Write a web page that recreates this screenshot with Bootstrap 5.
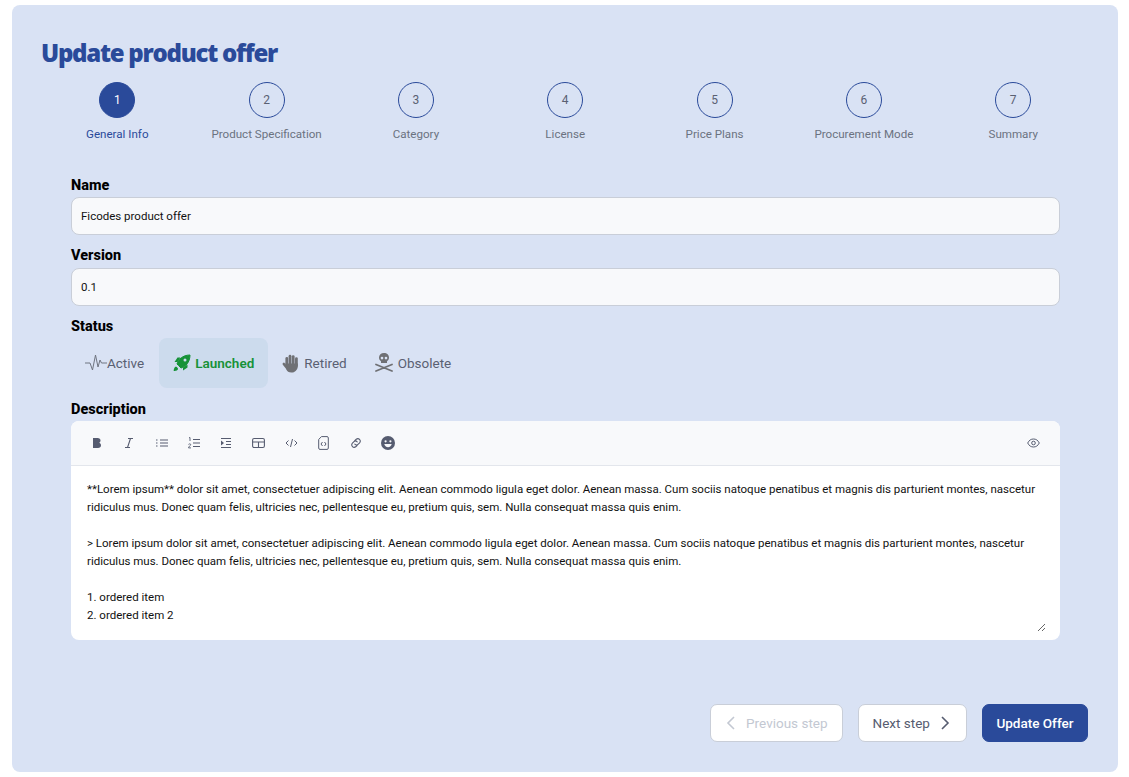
<!DOCTYPE html>
<html lang="en"><head><meta charset="utf-8"><title>Update product offer</title>
<link href="https://cdn.jsdelivr.net/npm/bootstrap@5.3.0/dist/css/bootstrap.min.css" rel="stylesheet">
<style>
html,body{height:100%;background:#fff;overflow:hidden}
body{font-family:Roboto,"Liberation Sans",sans-serif;padding:5px 11px 5px 12px;color:#000}
.offer-panel{background:#d9e2f4;border-radius:8px;height:767px;padding:33px 30px 30px}
.offer-title{font-family:"Open Sans",sans-serif;font-size:24px;font-weight:800;line-height:29px;letter-spacing:-1.25px;color:#2a4a9a;margin:0 0 15px -1px}
.step-row{padding-left:.6px}
.step-item{width:14.2857%}
.step-dot{width:36px;height:36px;border:1px solid #2a4a9a;font-size:12px;color:#5a6072}
.step-dot.on{background:#2a4a9a;color:#fff}
.step-name{font-size:11.6px;line-height:14px;color:#6b7280;margin-top:9px}
.step-name.on{color:#2a4a9a}
.form-zone{padding:0 28px 0 29px;margin-top:36px}
.field-label{font-size:14.5px;font-weight:800;line-height:17px;margin:0 0 3px;display:block}
.label-wide{margin-bottom:4px}
.field-input.form-control{height:38px;background:#f8f9fb;border:1px solid #c9ced8;border-radius:8px;font-size:11.5px;padding:0 9px;color:#111;margin-bottom:12px;box-shadow:none}
.status-row{height:50px;margin-bottom:13px}
.status-item{height:50px;font-size:13.5px;color:#5a6072;border-radius:8px;padding:0 14px;gap:4px}
.status-first{gap:0;padding-right:15px}
.status-last{gap:5px}
.status-item.on{background:#ccdbed;color:#169238;font-weight:600}
.editor-box{background:#fff;border-radius:8px;height:219px;overflow:hidden}
.editor-bar{height:45px;background:#f8f9fb;border-bottom:1px solid #e3e6ec;padding:0 20px 0 10px}
.tool-btn{width:32.33px;color:#565c70;display:flex;justify-content:center}
.editor-area{display:block;width:calc(100% - 14px);height:166px;border:0;outline:0;resize:both;font-size:11.5px;line-height:18px;padding:14px 2px 0 16px;color:#111;overflow:hidden;font-family:inherit}
.foot-row{margin-top:64px;gap:15px}
.foot-btn{height:38px;font-size:13.5px;border-radius:7px;background:#fff;border:1px solid #c9ced8;color:#565c70;padding:0 14px;gap:10px}
.foot-btn:disabled{background:#fff;border-color:#c9ced8;color:#c3c8d2;opacity:1}
.foot-prev{padding-left:15px}
.foot-next{padding-right:16px}
.foot-main{background:#2a4a9a;border-color:#2a4a9a;color:#fff;font-weight:500;padding:0 13.5px}
</style></head><body>
<div class="offer-panel">
<h1 class="offer-title">Update product offer</h1>
<div class="step-row d-flex">
<div class="step-item d-flex flex-column align-items-center"><div class="step-dot on rounded-circle d-flex align-items-center justify-content-center">1</div><div class="step-name on">General Info</div></div>
<div class="step-item d-flex flex-column align-items-center"><div class="step-dot rounded-circle d-flex align-items-center justify-content-center">2</div><div class="step-name">Product Specification</div></div>
<div class="step-item d-flex flex-column align-items-center"><div class="step-dot rounded-circle d-flex align-items-center justify-content-center">3</div><div class="step-name">Category</div></div>
<div class="step-item d-flex flex-column align-items-center"><div class="step-dot rounded-circle d-flex align-items-center justify-content-center">4</div><div class="step-name">License</div></div>
<div class="step-item d-flex flex-column align-items-center"><div class="step-dot rounded-circle d-flex align-items-center justify-content-center">5</div><div class="step-name">Price Plans</div></div>
<div class="step-item d-flex flex-column align-items-center"><div class="step-dot rounded-circle d-flex align-items-center justify-content-center">6</div><div class="step-name">Procurement Mode</div></div>
<div class="step-item d-flex flex-column align-items-center"><div class="step-dot rounded-circle d-flex align-items-center justify-content-center">7</div><div class="step-name">Summary</div></div>
</div>
<div class="form-zone">
<label class="field-label">Name</label>
<input class="form-control field-input" value="Ficodes product offer">
<label class="field-label label-wide">Version</label>
<input class="form-control field-input" value="0.1">
<label class="field-label">Status</label>
<div class="status-row d-flex">
<div class="status-item status-first d-flex align-items-center"><svg width="22" height="18" viewBox="0 0 22 18" fill="none" stroke="#6f7480" stroke-width="1"><path d="M0 9h5l2.500 7 3-15 2.500 12 2-7 1.500 3h5.500"/></svg>Active</div>
<div class="status-item on d-flex align-items-center"><svg width="18" height="18" viewBox="0 0 18 18" fill="none" stroke="#169238"><path d="M5.500 11.500L4 10c1-4 5.500-9 13-9 0 7.500-5 12-9 13z" fill="#169238" stroke-width="1"/><circle cx="12" cy="6" r="1.500" fill="#ccdbed" stroke="none"/><path d="M7.500 3.500H4.500L1.500 8h3zM14.500 10.500v3L10 16.500v-3z" fill="#169238" stroke="none"/><path d="M2 13c-1 1-1.300 3-1.300 4 1 0 3-.3 4-1.300 1.300-1.300-1.400-4-2.700-2.700z" fill="#169238" stroke="none"/></svg>Launched</div>
<div class="status-item d-flex align-items-center"><svg width="18" height="19" viewBox="0 0 18 19" fill="#6f7074"><rect x="3.400" y="3" width="2.800" height="10" rx="1.400"/><rect x="6.600" y=".8" width="2.800" height="11" rx="1.400"/><rect x="9.800" y="1.200" width="2.800" height="11" rx="1.400"/><rect x="13" y="3.200" width="2.800" height="10" rx="1.400"/><path d="M3.400 9.500h12.400V12c0 4-3 6.600-6.500 6.600-2.600 0-4.200-1-5-3z"/><path d="M5 14L1.800 9.900" stroke="#6f7074" stroke-width="2.500" stroke-linecap="round"/></svg>Retired</div>
<div class="status-item status-last d-flex align-items-center"><svg width="18" height="20" viewBox="0 0 18 20" fill="#6f7074"><path fill-rule="evenodd" d="M9 0c3 0 5 2 5 4.600 0 1.700-.8 2.900-2 3.600V10H6V8.200C4.800 7.500 4 6.300 4 4.600 4 2 6 0 9 0zM7 3.700a1.300 1.300 0 1 0 0 2.700 1.300 1.300 0 0 0 0-2.700zm4 0a1.300 1.300 0 1 0 0 2.700 1.300 1.300 0 0 0 0-2.700z"/><path d="M1 11.500l16 6.500M17 11.500L1 18" stroke="#6f7074" stroke-width="1.800" stroke-linecap="round"/></svg>Obsolete</div>
</div>
<label class="field-label">Description</label>
<div class="editor-box">
<div class="editor-bar d-flex align-items-center">
<span class="tool-btn"><svg width="12" height="12" viewBox="0 0 12 12" fill="currentColor"><path d="M2 1h4.500c2 0 3 1.200 3 2.600 0 1-.5 1.800-1.200 2.200 1 .4 1.700 1.300 1.700 2.500C10 10 8.800 11 7 11H2z"/></svg></span>
<span class="tool-btn"><svg width="12" height="12" viewBox="0 0 12 12" fill="none" stroke="currentColor" stroke-width="1.100"><path d="M5 1.500h5M2 10.500h5M7.500 1.500l-3 9"/></svg></span>
<span class="tool-btn"><svg width="12" height="12" viewBox="0 0 12 12" fill="none" stroke="currentColor"><path d="M4 3h8M4 6h8M4 9h8" stroke-width="1.100"/><path d="M0 3h2M0 6h2M0 9h2" stroke-width="1" stroke-dasharray="1 .5"/></svg></span>
<span class="tool-btn"><svg width="12" height="12" viewBox="0 0 12 12" fill="none" stroke="currentColor"><path d="M5 2.500h7M5 6h7M5 9.500h7" stroke-width="1.100"/><path d="M1 .8l1-.3v3.500M.5 7.500c.5-1 2.500-.8 2.200.4-.2.800-2.200 1.600-2.200 3h2.500" stroke-width=".9"/></svg></span>
<span class="tool-btn"><svg width="12" height="12" viewBox="0 0 12 12" fill="none" stroke="currentColor"><path d="M1 1.500h10M6 4.500h5M6 7.500h5M1 10.500h10" stroke-width="1.100"/><path d="M1 3.500l3 2.500-3 2.500z" fill="currentColor" stroke="none"/></svg></span>
<span class="tool-btn"><svg width="13" height="12" viewBox="0 0 13 12" fill="none" stroke="currentColor" stroke-width="1.100"><rect x=".6" y="1.500" width="11.800" height="9" rx="1.500"/><path d="M.6 5h11.800M6.500 5v5.500"/></svg></span>
<span class="tool-btn"><svg width="13" height="12" viewBox="0 0 13 12" fill="none" stroke="currentColor" stroke-width="1"><path d="M3.500 3.500L1 6l2.500 2.500M9.500 3.500L12 6 9.500 8.500M7.500 2l-2 8"/></svg></span>
<span class="tool-btn"><svg width="11" height="14" viewBox="0 0 11 14" fill="none" stroke="currentColor" stroke-width="1"><path d="M3.500.6h5.500a1.300 1.300 0 0 1 1.300 1.300v10.200a1.300 1.300 0 0 1-1.300 1.300H2a1.300 1.300 0 0 1-1.300-1.300V3.400z"/><path d="M4.500 6L3 8l1.500 2M6.500 6L8 8l-1.500 2"/></svg></span>
<span class="tool-btn"><svg width="12" height="12" viewBox="0 0 12 12" fill="none" stroke="currentColor" stroke-width="1.100" stroke-linecap="round"><path d="M5 3.500l1.300-1.300a2.500 2.500 0 0 1 3.500 3.500L8.300 7.200a2.500 2.500 0 0 1-3.500 0"/><path d="M7 8.500L5.700 9.800a2.500 2.500 0 0 1-3.500-3.500l1.500-1.500a2.500 2.500 0 0 1 3.500 0"/></svg></span>
<span class="tool-btn"><svg width="14" height="14" viewBox="0 0 14 14"><circle cx="7" cy="7" r="7" fill="currentColor"/><circle cx="4.600" cy="5.300" r="1.100" fill="#f8f9fb"/><circle cx="9.400" cy="5.300" r="1.100" fill="#f8f9fb"/><path d="M3.300 8h7.400c-.3 2-1.800 3.200-3.700 3.200S3.600 10 3.300 8z" fill="#f8f9fb"/></svg></span>
<svg class="ms-auto" width="13" height="10" viewBox="0 0 13 10" fill="none" stroke="#565c70" stroke-width="1"><path d="M.7 5C2 2.300 4 1 6.500 1s4.500 1.300 5.800 4c-1.300 2.700-3.300 4-5.800 4S2 7.700.7 5z"/><circle cx="6.500" cy="5" r="1.800"/></svg>
</div>
<textarea class="editor-area">**Lorem ipsum** dolor sit amet, consectetuer adipiscing elit. Aenean commodo ligula eget dolor. Aenean massa. Cum sociis natoque penatibus et magnis dis parturient montes, nascetur ridiculus mus. Donec quam felis, ultricies nec, pellentesque eu, pretium quis, sem. Nulla consequat massa quis enim.

&gt; Lorem ipsum dolor sit amet, consectetuer adipiscing elit. Aenean commodo ligula eget dolor. Aenean massa. Cum sociis natoque penatibus et magnis dis parturient montes, nascetur ridiculus mus. Donec quam felis, ultricies nec, pellentesque eu, pretium quis, sem. Nulla consequat massa quis enim.

1. ordered item
2. ordered item 2</textarea>
</div>
</div>
<div class="foot-row d-flex justify-content-end">
<button class="btn foot-btn foot-prev d-flex align-items-center" disabled><svg width="10" height="14" viewBox="0 0 10 14" fill="none" stroke="currentColor" stroke-width="1.600"><path d="M8 1L2 7l6 6"/></svg>Previous step</button>
<button class="btn foot-btn foot-next d-flex align-items-center">Next step<svg width="10" height="14" viewBox="0 0 10 14" fill="none" stroke="currentColor" stroke-width="1.600"><path d="M2 1l6 6-6 6"/></svg></button>
<button class="btn foot-btn foot-main d-flex align-items-center">Update Offer</button>
</div>
</div>
<script src="https://cdn.jsdelivr.net/npm/bootstrap@5.3.0/dist/js/bootstrap.bundle.min.js"></script>
</body></html>
